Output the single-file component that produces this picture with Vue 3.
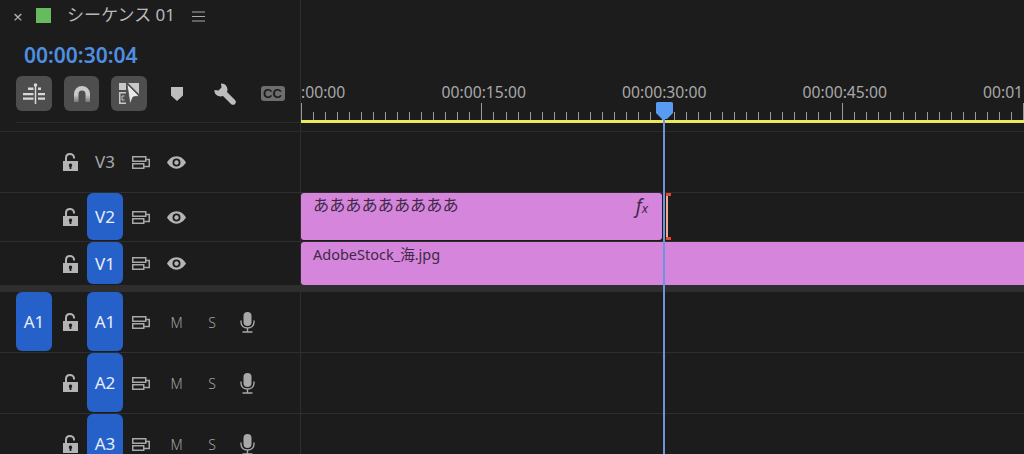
<template>
  <div class="panel">
    <!-- 图标 -->
    <svg class="defs" width="0" height="0">
      <symbol id="lock" viewBox="0 0 15 18">
        <path d="M3 9V5C3 2.500 4.800 1 7 1s4 1.500 4 3.500V5.500" fill="none" stroke="currentColor" stroke-width="2" />
        <path fill-rule="evenodd" d="M0 8h15v10H0zM7.500 10.600a1.800 1.800 0 0 0-.9 3.300V16h1.800v-2.100a1.800 1.800 0 0 0-.9-3.300z" fill="currentColor" />
      </symbol>
      <symbol id="sync" viewBox="0 0 18 13">
        <rect x="0.750" y="0.750" width="13" height="4.500" fill="none" stroke="currentColor" stroke-width="1.500" />
        <rect x="0.750" y="7.750" width="11" height="4.500" fill="none" stroke="currentColor" stroke-width="1.500" />
        <path d="M13 3.500h4.250v7H11.500" fill="none" stroke="currentColor" stroke-width="1.500" />
      </symbol>
      <symbol id="eye" viewBox="0 0 20 13">
        <path fill-rule="evenodd" d="M10 0c4.400 0 7.800 3 10 6.500C17.800 10 14.400 13 10 13S2.200 10 0 6.500C2.200 3 5.600 0 10 0zM10 2.300a4.200 4.200 0 1 0 0 8.400 4.200 4.200 0 0 0 0-8.400z" fill="currentColor" />
        <circle cx="10" cy="6.500" r="2.300" fill="currentColor" />
      </symbol>
      <symbol id="mic" viewBox="0 0 15 21">
        <rect x="3.500" y="0" width="8" height="14" rx="4" fill="currentColor" />
        <path d="M1 8.500v1.500c0 3.800 2.800 6 6.500 6s6.500-2.200 6.500-6V8.500M7.500 16v3.500M2.500 20h10" fill="none" stroke="currentColor" stroke-width="1.400" />
      </symbol>
      <linearGradient id="magnet-tip" x1="0" y1="0" x2="0" y2="1">
        <stop offset="0.550" stop-color="#c9c9c9" />
        <stop offset="1" stop-color="#777" />
      </linearGradient>
    </svg>

    <div class="top">
      <div class="head">
        <div class="title-row">
          <span class="close">×</span>
          <span class="swatch"></span>
          <span class="title">シーケンス 01</span>
          <svg class="menu" width="13" height="11" viewBox="0 0 13 11">
            <path d="M0 1h13M0 5.500h13M0 10h13" stroke="currentColor" stroke-width="1.200" />
          </svg>
        </div>
        <div class="timecode">00:00:30:04</div>
        <div class="tools">
          <button class="tool on">
            <svg width="22" height="21" viewBox="0 0 22 21">
              <path d="M12.500 2v19" stroke="#d8d8d8" stroke-width="1.500" />
              <circle cx="12.500" cy="2" r="1.800" fill="#d8d8d8" />
              <path d="M5 4.500h5.500V7H5zM15 4.500h3V7h-3zM0 10h10.500v2.300H0zM15 10h7v2.300h-7zM0 14.500h10.500v2.300H0zM15 14.500h7v2.300h-7z" fill="#d8d8d8" />
            </svg>
          </button>
          <button class="tool on">
            <svg width="16" height="16" viewBox="0 0 16 16">
              <path d="M0 16V8a8 8 0 0 1 16 0v8h-4.500V8a3.500 3.500 0 0 0-7 0v8z" fill="url(#magnet-tip)" />
            </svg>
          </button>
          <button class="tool on">
            <svg width="20" height="22" viewBox="0 0 20 22">
              <path d="M0 0h7v7H0zM9 0h11v11z" fill="#c8c8c8" />
              <path d="M8 1l12 12-6 1-3 7z" fill="#e8e8e8" stroke="#4e4e4e" stroke-width="0.800" />
              <path d="M0 9h7v1.500H1.500v9H7V21H0z" fill="#c8c8c8" />
              <path d="M5.500 13H3v4h2.500" fill="none" stroke="#c8c8c8" stroke-width="1" />
            </svg>
          </button>
          <button class="tool">
            <svg width="12" height="14" viewBox="0 0 12 14">
              <path d="M0 0h12v8.500L6 14 0 8.500z" fill="#bdbdbd" />
            </svg>
          </button>
          <button class="tool">
            <svg class="wrench" width="22" height="22" viewBox="0 0 22 22">
              <path d="M7 .5c3.500-.5 6.500 2.500 6.500 6 0 .9-.2 1.700-.5 2.500l8 8c1.300 1.300 1 3 0 4s-2.700 1.300-4 0l-8-8c-.8.3-1.600.5-2.500.5-3.500 0-6.500-3-6-6.500l4 .5 3-3z" fill="#bdbdbd" />
            </svg>
          </button>
          <button class="tool">
            <span class="cc">CC</span>
          </button>
        </div>
        <div class="head-line"></div>
      </div>

      <div class="ruler">
        <div class="labels">
          <span v-for="label in labels" :key="label" class="label">{{ label }}</span>
        </div>
        <svg class="ticks" width="723" height="18">
          <line
            v-for="tick in ticks"
            :key="tick.x"
            :x1="tick.x"
            :x2="tick.x"
            :y1="tick.major ? 1 : 10"
            y2="18"
            stroke="#9a9a9a"
          />
        </svg>
        <div class="work-area"></div>
      </div>
    </div>

    <div
      v-for="track in tracks"
      :key="track.name"
      class="row"
      :class="track.cls"
    >
      <div class="controls">
        <div class="cell">
          <span v-if="track.source" class="patch">{{ track.source }}</span>
        </div>
        <div class="cell"><svg class="i-lock"><use href="#lock" /></svg></div>
        <div class="cell">
          <span class="patch" :class="{ off: !track.active }">{{ track.name }}</span>
        </div>
        <div class="cell"><svg class="i-sync"><use href="#sync" /></svg></div>
        <template v-if="track.audio">
          <div class="cell letter">M</div>
          <div class="cell letter">S</div>
          <div class="cell"><svg class="i-mic"><use href="#mic" /></svg></div>
        </template>
        <div v-else class="cell"><svg class="i-eye"><use href="#eye" /></svg></div>
      </div>
      <div class="lane">
        <div v-if="track.name === 'V2'" class="clip short">
          <span class="clip-name jp">あああああああああ</span>
          <span class="fx">f<small>x</small></span>
        </div>
        <div v-if="track.name === 'V2'" class="edit-mark"></div>
        <div v-if="track.name === 'V1'" class="clip long">
          <span class="clip-name">AdobeStock_海.jpg</span>
        </div>
      </div>
    </div>

    <!-- 播放头 -->
    <div class="playhead">
      <svg width="17" height="17" viewBox="0 0 17 17">
        <path d="M0 1.500A1.500 1.500 0 0 1 1.500 0h14A1.500 1.500 0 0 1 17 1.500V11l-6 6H6l-6-6z" fill="#5a9bf2" />
      </svg>
      <div class="playhead-line"></div>
    </div>
  </div>
</template>

<script setup>
// 只写画面上露出来的部分
const labels = [':00:00', '00:00:15:00', '00:00:30:00', '00:00:45:00', '00:01']

// 每 15 秒一个长刻度
const ticks = Array.from({ length: 61 }, (_, i) => ({
  x: Math.round(i * 12.03) + 0.5,
  major: i % 15 === 0,
})).filter((tick) => tick.x < 723)

const tracks = [
  { name: 'V3', cls: 'r-v3', active: false },
  { name: 'V2', cls: 'r-v2', active: true },
  { name: 'V1', cls: 'r-v1', active: true },
  { name: 'A1', cls: 'r-a1', active: true, audio: true, source: 'A1' },
  { name: 'A2', cls: 'r-a2', active: true, audio: true },
  { name: 'A3', cls: 'r-a3', active: true, audio: true },
]
</script>

<style>
html,
body {
  background: #1c1c1c;
  overflow: hidden;
}
</style>

<style scoped>
.panel {
  position: relative;
  width: 1024px;
  height: 454px;
  overflow: hidden;
  background: #1c1c1c;
  color: #b4b4b4;
  font-family: 'Noto Sans', 'Noto Sans CJK JP', sans-serif;
}

.defs {
  display: block;
  height: 0;
}

.top {
  display: flex;
  height: 132px;
  border-bottom: 1px solid #2a2a2a;
  box-sizing: border-box;
}

.head {
  width: 301px;
  flex: none;
  box-sizing: border-box;
  border-right: 1px solid #2e2e2e;
}

.title-row {
  display: flex;
  align-items: center;
  height: 34px;
  padding-left: 13px;
}

.close {
  width: 23px;
  font-size: 17px;
  line-height: 34px;
  color: #b0b0b0;
}

.swatch {
  width: 15px;
  height: 15px;
  margin-bottom: 4px;
  background: #66bb5e;
}

.title {
  margin: 0 0 4px 16px;
  font-size: 17px;
  line-height: 24px;
  color: #b8b8b8;
  white-space: nowrap;
}

.menu {
  margin: 0 0 2px 17px;
  color: #a8a8a8;
}

.timecode {
  height: 42px;
  padding: 7px 0 0 24px;
  box-sizing: border-box;
  font-size: 21px;
  line-height: 28px;
  font-weight: 600;
  color: #4f8fe3;
}

.tools {
  display: flex;
  gap: 12px;
  padding-left: 16px;
}

.tool {
  display: flex;
  align-items: center;
  justify-content: center;
  width: 36px;
  height: 35px;
  padding: 0;
  border: 0;
  border-radius: 6px;
  background: transparent;
}

.tool.on {
  background: #4e4e4e;
}

.tool.on:nth-child(2) {
  width: 35px;
}

.wrench {
  margin-right: 1px;
}

.cc {
  width: 24px;
  height: 15px;
  margin-right: 1px;
  border-radius: 3px;
  background: #6e6e6e;
  color: #1c1c1c;
  font-size: 13px;
  line-height: 15px;
  font-weight: 700;
  text-align: center;
}

.head-line {
  height: 1px;
  margin: 11px 0 0 16px;
  background: #2b2b2b;
}

.ruler {
  flex: 1;
  min-width: 0;
  overflow: hidden;
}

.labels {
  display: flex;
  height: 20px;
  margin-top: 82px;
}

.label {
  flex: none;
  width: 180.5px;
  text-align: center;
  font-size: 15.700px;
  line-height: 20px;
  color: #a8a8a8;
  white-space: nowrap;
}

.label:first-child {
  width: 92.500px;
  text-align: left;
}

.label:last-child {
  width: auto;
  padding-left: 48px;
  text-align: left;
}

.ticks {
  display: block;
}

.work-area {
  height: 3px;
  background: #ece85c;
}

.row {
  display: flex;
  box-sizing: border-box;
  border-bottom: 1px solid #2e2e2e;
}

.r-v3 { height: 61px; }
.r-v2 { height: 49px; }
.r-v1 {
  height: 50px;
  border-bottom: 7px solid #2e2e2e;
}
.r-a1 { height: 61px; }
.r-a2 { height: 61px; }
.r-a3 { height: 61px; }

.controls {
  display: grid;
  grid-template-columns: 36px 35px 36px 36px 35px 36px 35px;
  width: 301px;
  flex: none;
  box-sizing: border-box;
  padding-left: 16px;
  border-right: 1px solid #2e2e2e;
}

.cell {
  display: flex;
  align-items: center;
  justify-content: center;
  min-width: 0;
}

.patch {
  display: flex;
  align-items: center;
  justify-content: center;
  align-self: stretch;
  width: 36px;
  margin-bottom: 1px;
  border-radius: 6px;
  background: #2561c9;
  color: #e8eefa;
  font-size: 17px;
}

.patch.off {
  background: transparent;
  color: #a8a8a8;
}

.i-lock {
  width: 15px;
  height: 18px;
  margin-left: 1px;
  color: #b4b4b4;
}

.i-sync {
  width: 18px;
  height: 13px;
  color: #a8a8a8;
}

.i-eye {
  width: 19px;
  height: 13px;
  color: #b4b4b4;
}

.i-mic {
  width: 15px;
  height: 21px;
  color: #a8a8a8;
}

.letter {
  font-size: 14px;
  font-weight: 300;
  color: #a0a0a0;
}

.lane {
  position: relative;
  flex: 1;
  min-width: 0;
  display: flex;
}

.clip {
  box-sizing: border-box;
  display: flex;
  justify-content: space-between;
  padding: 1px 14px 0 12px;
  border-radius: 3px 0 0 3px;
  background: #d585dc;
  color: #3d2a45;
}

.clip.short {
  width: 361px;
  margin-bottom: 1px;
  border-radius: 3px;
}

.clip.long {
  flex: 1;
}

.clip-name {
  font-size: 14.500px;
  line-height: 22px;
  white-space: nowrap;
}

.clip-name.jp {
  font-size: 16.200px;
}

.fx {
  margin-top: 2px;
  font-size: 19px;
  font-style: italic;
  line-height: 20px;
}

.fx small {
  font-size: 13px;
}

.edit-mark {
  width: 5px;
  margin: 0 0 1px 4px;
  background:
    linear-gradient(#e0492f, #e0492f) top left / 5px 3px no-repeat,
    linear-gradient(#e0492f, #e0492f) bottom left / 5px 3px no-repeat,
    linear-gradient(#f2a896, #f2a896) left / 2px 100% no-repeat;
}

.playhead {
  position: absolute;
  left: 656px;
  top: 102px;
  width: 17px;
  height: 352px;
}

.playhead svg {
  display: block;
}

.playhead-line {
  width: 1.500px;
  height: 335px;
  margin-left: 7.250px;
  background: #6a95dd;
}
</style>
